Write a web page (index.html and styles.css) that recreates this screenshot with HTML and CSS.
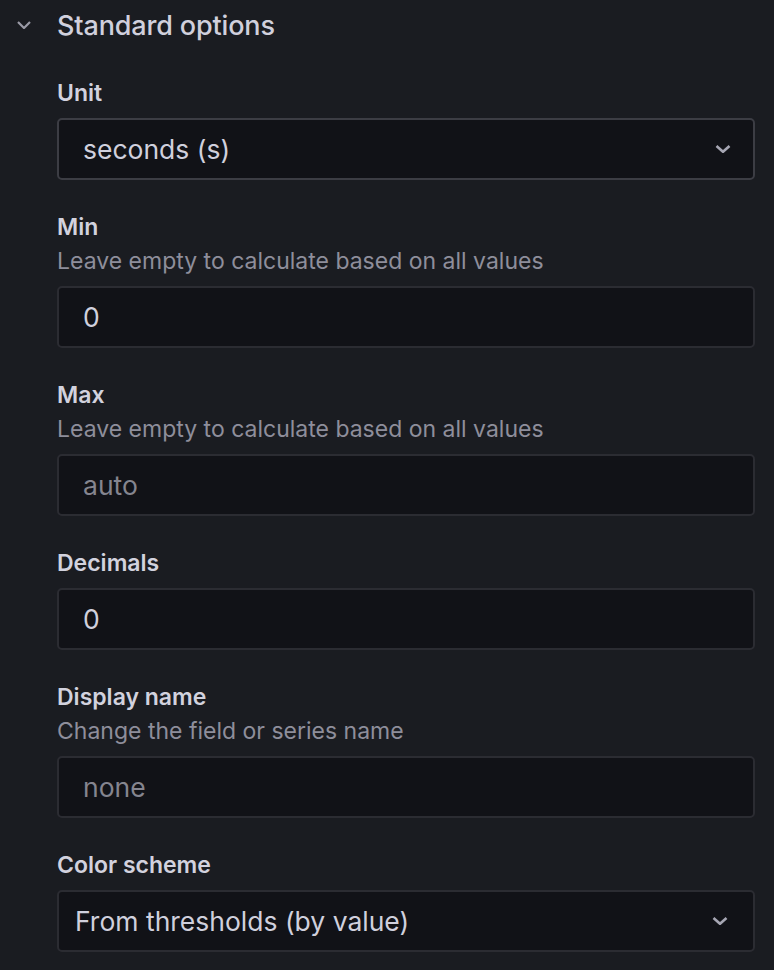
FILE: index.html
```html
<!DOCTYPE html>
<html>
<head>
<meta charset="utf-8">
<link rel="stylesheet" href="styles.css">
</head>
<body>
<div class="panel">
  <div class="section-header">
    <svg class="caret" width="14" height="8" viewBox="0 0 14 8"><path d="M1 1 L7 7 L13 1" fill="none" stroke="#9a9aa6" stroke-width="2.2"/></svg>
    <span class="section-title">Standard options</span>
  </div>
  <div class="fields">
    <div class="field">
      <div class="label">Unit</div>
      <div class="input select hover"><span class="value">seconds (s)</span>
        <svg class="chev" width="16" height="8" viewBox="0 0 16 8"><path d="M1.5 1 L8 6.8 L14.5 1" fill="none" stroke="#a6a6b3" stroke-width="2.6"/></svg>
      </div>
    </div>
    <div class="field">
      <div class="label">Min</div>
      <div class="desc">Leave empty to calculate based on all values</div>
      <div class="input"><span class="value">0</span></div>
    </div>
    <div class="field">
      <div class="label">Max</div>
      <div class="desc">Leave empty to calculate based on all values</div>
      <div class="input"><span class="value placeholder">auto</span></div>
    </div>
    <div class="field">
      <div class="label">Decimals</div>
      <div class="input"><span class="value">0</span></div>
    </div>
    <div class="field">
      <div class="label">Display name</div>
      <div class="desc">Change the field or series name</div>
      <div class="input"><span class="value placeholder">none</span></div>
    </div>
    <div class="field">
      <div class="label">Color scheme</div>
      <div class="input select narrow"><span class="value">From thresholds (by value)</span>
        <svg class="chev" width="16" height="8" viewBox="0 0 16 8"><path d="M1.5 1 L8 6.8 L14.5 1" fill="none" stroke="#a6a6b3" stroke-width="2.6"/></svg>
      </div>
    </div>
  </div>
</div>
</body>
</html>
```
FILE: styles.css
```css
html, body {
  margin: 0;
  padding: 0;
  background: #1a1c21;
}
body {
  font-family: Inter, "Noto Sans", sans-serif;
  color: #ccccdc;
  width: 774px;
  height: 970px;
  overflow: hidden;
}
.panel {
  padding: 0 19px 0 57px;
}
.section-header {
  display: flex;
  align-items: center;
  height: 50px;
  position: relative;
}
.caret {
  position: absolute;
  left: -40px;
  top: 21px;
}
.section-title {
  font-size: 27px;
  font-weight: 500;
  color: #d0d0dd;
  letter-spacing: -0.15px;
}
.fields {
  padding-top: 28px;
}
.field {
  margin-bottom: 32px;
}
.label {
  font-size: 23px;
  font-weight: 600;
  line-height: 30px;
  color: #d2d2de;
}
.desc {
  font-size: 23px;
  line-height: 30px;
  margin-top: 4px;
  color: #8e8e9b;
}
.label + .input, .desc + .input {
  margin-top: 10px;
}
.input {
  box-sizing: border-box;
  height: 62px;
  background: #111217;
  border: 2px solid #2b2c32;
  border-radius: 5px;
  display: flex;
  align-items: center;
  padding: 0 22px 0 24px;
}
.input.hover {
  border-color: #3c3d44;
}
.input.narrow {
  padding: 0 25px 0 16px;
}
.value {
  flex: 1;
  font-size: 26.5px;
  color: #d0d0dd;
}
.value.placeholder {
  color: #85858f;
}
```
